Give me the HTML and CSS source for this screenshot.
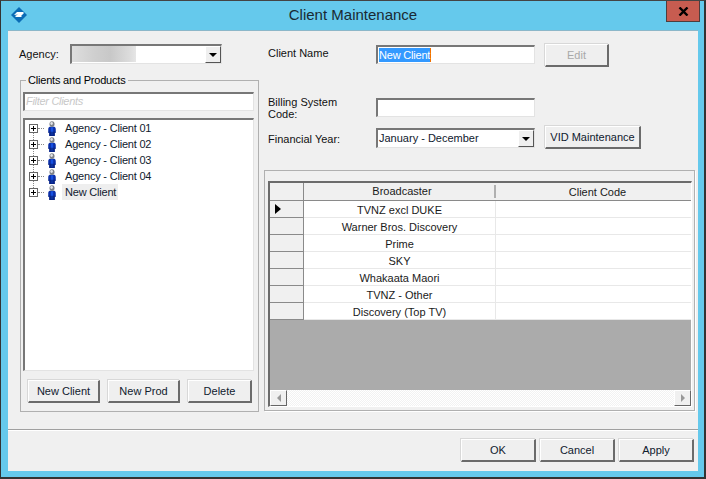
FILE: index.html
```html
<!DOCTYPE html>
<html lang="en">
<head>
<meta charset="utf-8">
<title>Client Maintenance</title>
<link rel="stylesheet" href="styles.css">
</head>
<body>
<div class="window">
  <header class="titlebar">
    <svg class="app-icon" width="18" height="18" viewBox="0 0 18 18"><path d="M9 1 17 9 9 17 1 9Z" fill="#0b6cb5"/><path d="M4 9 7 6H13L14 7 11 10 12 11H6L5 10 8 8.5Z" fill="#fff"/></svg>
    <h1 class="title">Client Maintenance</h1>
    <div class="close"><svg width="11" height="9" viewBox="0 0 11 9"><path d="M1.5 0.5 9.5 8.5M9.5 0.5 1.5 8.5" stroke="#000" stroke-width="2.4" fill="none"/></svg></div>
  </header>
  <div class="content">
    <div class="main">
      <section class="left">
        <div class="agency-row">
          <span class="label agency-label">Agency:</span>
          <div class="field combo agency-combo"><div class="blurred"></div><span class="combo-btn"><i class="arrow"></i></span></div>
        </div>
        <fieldset class="group">
          <legend>Clients and Products</legend>
          <div class="field filter">Filter Clients</div>
          <div class="field tree">
            <div class="node first"><span class="expander"></span><span class="dots"></span><svg class="person" width="8" height="15" viewBox="0 0 10 18" preserveAspectRatio="none"><use href="#person"/></svg><span class="node-text">Agency - Client 01</span></div>
            <div class="node"><span class="expander"></span><span class="dots"></span><svg class="person" width="8" height="15" viewBox="0 0 10 18" preserveAspectRatio="none"><use href="#person"/></svg><span class="node-text">Agency - Client 02</span></div>
            <div class="node"><span class="expander"></span><span class="dots"></span><svg class="person" width="8" height="15" viewBox="0 0 10 18" preserveAspectRatio="none"><use href="#person"/></svg><span class="node-text">Agency - Client 03</span></div>
            <div class="node"><span class="expander"></span><span class="dots"></span><svg class="person" width="8" height="15" viewBox="0 0 10 18" preserveAspectRatio="none"><use href="#person"/></svg><span class="node-text">Agency - Client 04</span></div>
            <div class="node last"><span class="expander"></span><span class="dots"></span><svg class="person" width="8" height="15" viewBox="0 0 10 18" preserveAspectRatio="none"><use href="#person"/></svg><span class="node-text selected">New Client</span></div>
          </div>
          <div class="tree-buttons">
            <button class="btn w72">New Client</button>
            <button class="btn w72">New Prod</button>
            <button class="btn w64">Delete</button>
          </div>
        </fieldset>
      </section>
      <section class="right">
        <div class="form">
          <div class="row row-name">
            <span class="label form-label">Client Name</span>
            <div class="field input"><span class="selection">New Client</span></div>
            <button class="btn w64 h23 disabled">Edit</button>
          </div>
          <div class="row row-billing">
            <span class="label form-label">Billing System<br>Code:</span>
            <div class="field input"></div>
          </div>
          <div class="row row-year">
            <span class="label form-label">Financial Year:</span>
            <div class="field combo year-combo"><span class="combo-text">January - December</span><span class="combo-btn"><i class="arrow"></i></span></div>
            <button class="btn w96 h23">VID Maintenance</button>
          </div>
        </div>
        <div class="grid-panel">
          <div class="grid">
            <div class="grid-row header">
              <div class="rh"></div><div class="c1">Broadcaster</div><div class="c2">Client Code</div>
            </div>
            <div class="grid-row"><div class="rh"><i class="pointer"></i></div><div class="c1">TVNZ excl DUKE</div><div class="c2"></div></div>
            <div class="grid-row"><div class="rh"></div><div class="c1">Warner Bros. Discovery</div><div class="c2"></div></div>
            <div class="grid-row"><div class="rh"></div><div class="c1">Prime</div><div class="c2"></div></div>
            <div class="grid-row"><div class="rh"></div><div class="c1">SKY</div><div class="c2"></div></div>
            <div class="grid-row"><div class="rh"></div><div class="c1">Whakaata Maori</div><div class="c2"></div></div>
            <div class="grid-row"><div class="rh"></div><div class="c1">TVNZ - Other</div><div class="c2"></div></div>
            <div class="grid-row"><div class="rh"></div><div class="c1">Discovery (Top TV)</div><div class="c2"></div></div>
            <div class="grid-empty"></div>
            <div class="hscroll">
              <span class="sb-btn"><i class="sb-left"></i></span>
              <span class="sb-track"></span>
              <span class="sb-btn"><i class="sb-right"></i></span>
            </div>
          </div>
        </div>
      </section>
    </div>
    <footer class="footer">
      <button class="btn w75 h23">OK</button>
      <button class="btn w75 h23">Cancel</button>
      <button class="btn w75 h23">Apply</button>
    </footer>
  </div>
</div>
<svg class="defs" width="0" height="0"><defs><g id="person"><path d="M2 7C.8 7.500 .3 9 .3 10V14H1.500V18H8.500V14H9.700V10C9.700 9 9.200 7.500 8 7Z" fill="#0a2ea8"/><path d="M3.500 7.500H6.500V17H3.500Z" fill="#1650e0"/><path d="M.3 13V14H1.500V18H8.500V14H9.700V13Z" fill="#071c6e" opacity=".6"/><ellipse cx="5" cy="3.700" rx="3.200" ry="3.500" fill="#7d8189"/><ellipse cx="4.500" cy="3" rx="1.600" ry="1.700" fill="#e2e4e7"/></g></defs></svg>
</body>
</html>
```
FILE: styles.css
```css
* { box-sizing: border-box; }
html, body { margin: 0; padding: 0; }
body { width: 706px; height: 479px; overflow: hidden; font: 11px "Liberation Sans", Arial, sans-serif; color: #000; }
.defs { position: absolute; }
.window { width: 706px; height: 479px; background: #65c9ec; border: 1px solid #333; border-bottom-width: 2px; border-right-width: 2px; border-top-color: #444; padding: 0 6px 6px 7px; display: flex; flex-direction: column; }
.titlebar { height: 30px; flex: none; display: flex; align-items: center; position: relative; justify-content: center; border-bottom: 1px solid #8cb7c9; }
.app-icon { position: absolute; left: 2px; top: 5px; }
.title { margin: 0; font-weight: 400; font-size: 15px; color: #1a2a33; position: relative; top: -1px; }
.close { position: absolute; right: -2px; top: 0; width: 34px; height: 21px; background: #c75c50; border: 1px solid #4e3d3d; border-top: none; display: flex; align-items: center; justify-content: center; }
.content { flex: 1; background: #f0f0f0; display: flex; flex-direction: column; min-height: 0; }
.main { height: 399px; flex: none; display: flex; padding: 13px 3px 0 11px; border-bottom: 1px solid #a0a0a0; box-shadow: 0 1px 0 #fff; }
.left { width: 245px; flex: none; }
.right { flex: 1; display: flex; flex-direction: column; min-width: 0; }
.agency-row { display: flex; align-items: center; height: 20px; }
.agency-label { width: 51px; flex: none; }
.label { line-height: 14px; color: #111; }
.field { background: #fff; border: 1px solid #fff; border-top: 2px solid #777; border-left: 2px solid #777; border-right-color: #e3e3e3; border-bottom-color: #e3e3e3; }
.combo { display: flex; align-items: stretch; justify-content: space-between; padding: 0; height: 20px; position: relative; }
.agency-combo { width: 152px; }
.blurred { width: 64px; margin: 0 0 1px; background: linear-gradient(90deg, #dedede, #cfcfcf 35%, #c8c8c8 60%, #dcdcdc 90%, #e6e6e6); }
.combo-btn { width: 16px; background: #efefef; border-right: 1px solid #555; border-bottom: 1px solid #555; border-top: 1px solid #fff; border-left: 1px solid #fff; display: flex; align-items: center; justify-content: center; }
.arrow { width: 0; height: 0; border: 4px solid transparent; border-top: 4px solid #000; border-bottom: 0; }
.group { margin: 9px 0 0 1px; padding: 0 0 0 2px; width: 239px; height: 339px; border: 1px solid #b0b0b0; min-width: 0; }
.group legend { padding: 0 2px; margin-left: 3px; line-height: 14px; font-size: 11px; letter-spacing: -0.2px; }
.filter { width: 231px; height: 19px; margin-top: 5px; padding-left: 1px; font-style: italic; font-size: 11px; letter-spacing: -0.3px; color: #c8c8c8; line-height: 15px; }
.tree { width: 231px; height: 253px; margin-top: 7px; padding: 0 0 0 4px; }
.node { display: flex; align-items: center; height: 16px; position: relative; }
.expander { width: 9px; height: 9px; flex: none; border: 1px solid #666; background: linear-gradient(#000, #000) center/5px 1px no-repeat, linear-gradient(#000, #000) center/1px 5px no-repeat, #fff; position: relative; z-index: 1; }
.node:not(.first)::before { content: ""; position: absolute; left: 4px; top: -4px; height: 8px; border-left: 1px dotted #888; }
.dots { width: 6px; flex: none; border-top: 1px dotted #888; margin-right: 4px; }
.person { flex: none; }
.node-text { padding: 1px 2px; height: 16px; line-height: 14px; margin-left: 7px; white-space: nowrap; color: #10202e; letter-spacing: -0.2px; }
.selected { background: #eee; margin-left: 6px; padding-left: 3px; }
.tree-buttons { display: flex; gap: 8px; margin: 9px 0 0 5px; }
.btn { font: 11px "Liberation Sans", Arial, sans-serif; color: #10202e; height: 23px; padding: 0; background: #efefef; border: 1px solid #fff; border-right: 2px solid #6b6b6b; border-bottom: 2px solid #6b6b6b; box-shadow: -1px -1px 0 #d8d8d8; }
.w72 { width: 72px; }
.w64 { width: 64px; }
.w96 { width: 96px; }
.w75 { width: 75px; }
.h23 { height: 23px; }
.disabled { color: #a8a8a8; }
.form { height: 126px; flex: none; padding-left: 4px; }
.row { display: flex; position: relative; }
.form-label { width: 108px; flex: none; }
.input { width: 159px; height: 19px; flex: none; line-height: 14px; font-size: 12px; padding: 1px 0 0 1px; }
.row-name { height: 54px; }
.row-name .form-label { padding-top: 2px; }
.row-name .input { margin-top: 1px; }
.row-name .btn { margin-left: 10px; }
.row-billing { height: 30px; }
.row-billing .form-label { line-height: 12px; margin-top: -2px; }
.row-year { align-items: flex-start; }
.row-year .form-label { padding-top: 4px; }
.year-combo { width: 159px; }
.row-year .btn { margin-left: 10px; margin-top: -2px; }
.selection { background: #3399ff; color: #fff; display: inline-block; height: 14px; border-right: 1px solid #f07000; font-size: 11px; letter-spacing: -0.2px; vertical-align: top; }
.combo-text { padding-left: 1px; line-height: 17px; color: #10202e; }
.grid-panel { width: 431px; height: 241px; border: 1px solid #b0b0b0; padding: 10px 3px 0 3px; box-shadow: 1px 1px 0 #fff; }
.grid { height: 226px; width: 424px; border: 1px solid #fff; border-top: 2px solid #6b6b6b; border-left: 2px solid #6b6b6b; display: flex; flex-direction: column; background: #ababab; }
.grid-row { display: flex; height: 17px; flex: none; background: #fff; border-bottom: 1px solid #e8e8e8; }
.grid-row > div { line-height: 18px; text-align: center; color: #1a1a1a; }
.rh { width: 34px; flex: none; background: #f0f0f0; border-right: 1px solid #8a8a8a; border-bottom: 1px solid #8a8a8a; display: flex; align-items: center; padding-left: 5px; margin-bottom: -1px; height: 17px; }
.c1 { width: 192px; flex: none; border-right: 1px solid #e8e8e8; }
.c2 { flex: 1; }
.header { height: 18px; background: #f0f0f0; border-bottom: 1px solid #8a8a8a; }
.grid-row.header .c1 { border-right: 2px solid #b0b0b0; margin: 2px 0; line-height: 13px; padding-left: 6px; }
.grid-row.header .c2 { line-height: 16px; padding: 1px 0 0 8px; }
.header .rh { height: 18px; }
.pointer { width: 0; height: 0; border: 5px solid transparent; border-left: 6px solid #000; border-right: 0; }
.grid-empty { flex: 1; background: #ababab; }
.hscroll { height: 16px; flex: none; display: flex; background: repeating-conic-gradient(#f2f2f2 0 25%, #fff 0 50%) 0 0/2px 2px; }
.sb-btn { width: 17px; flex: none; background: #f0f0f0; border: 1px solid #fff; border-right: 1px solid #666; border-bottom: 1px solid #666; display: flex; align-items: center; justify-content: center; }
.sb-track { flex: 1; }
.sb-left { width: 0; height: 0; border: 4px solid transparent; border-right: 4px solid #999; border-left: 0; }
.sb-right { width: 0; height: 0; border: 4px solid transparent; border-left: 4px solid #999; border-right: 0; }
.footer { flex: 1; display: flex; justify-content: flex-end; gap: 4px; padding: 9px 4px 0 0; }
```
